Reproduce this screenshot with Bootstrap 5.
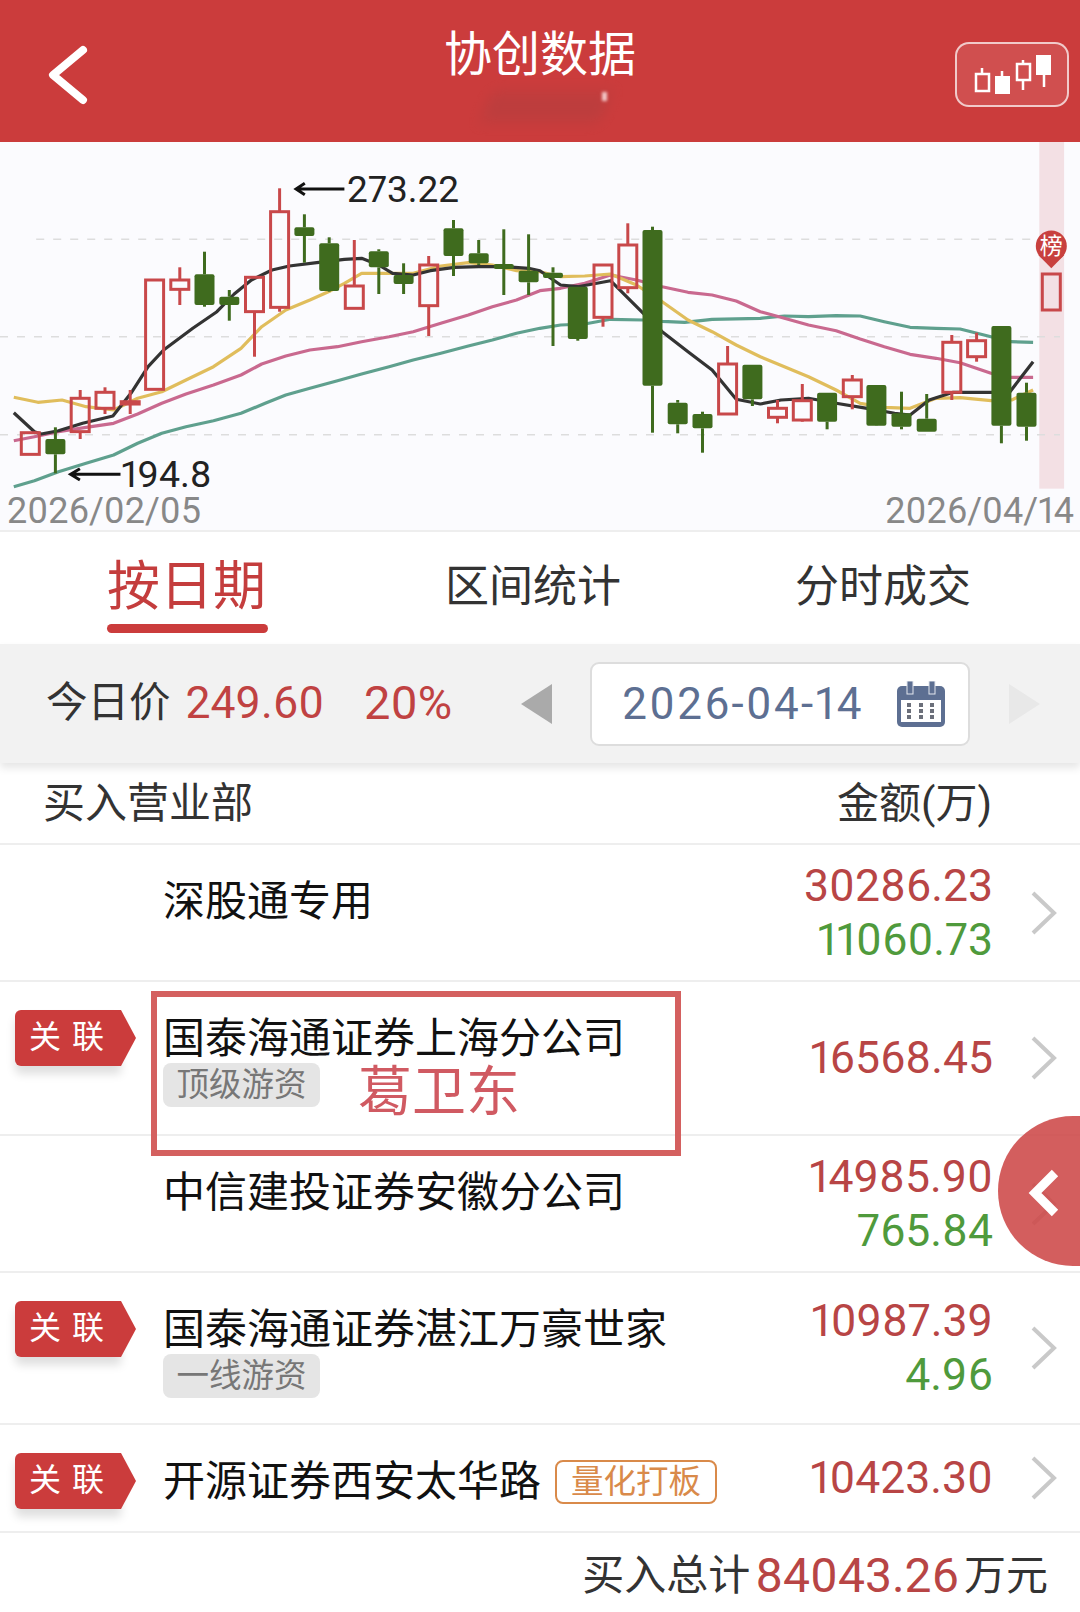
<!DOCTYPE html>
<html lang="zh-CN">
<head>
    <meta charset="UTF-8">
    <meta name="viewport" content="width=device-width, initial-scale=1.0">
    <title>协创数据</title>
    <link rel="stylesheet" href="https://cdn.jsdelivr.net/npm/bootstrap@5.3.2/dist/css/bootstrap.min.css">
    <script src="https://cdn.jsdelivr.net/npm/bootstrap@5.3.2/dist/js/bootstrap.bundle.min.js"></script>
<style>
    html, body{ width: 1080px; height: 1612px; overflow: hidden; }
    body{ font-family: Roboto, "Noto Sans CJK SC", sans-serif; background: #fff; color: #111; font-variant-numeric: proportional-nums; }

    .top-bar{ height: 142px; background: #cb3c3c; padding: 0 11px 0 46px; }
    .back-icon{ margin-top: 8px; }
    .top-title{ position: absolute; left: 0; right: 0; top: 26px; text-align: center; color: #fff; font-size: 48px; line-height: 58px; }
    .top-blur{ position: absolute; left: 486px; top: 92px; width: 120px; height: 30px; background: #a84040; filter: blur(7px); transform: skewX(-20deg); opacity: .4; }
    .top-speck{ position: absolute; left: 602px; top: 92px; width: 5px; height: 9px; background: #f3c9c9; filter: blur(1.5px); }
    .kline-btn{ width: 114px; height: 65px; margin-top: 7px; border: 2px solid rgba(255,255,255,.7); border-radius: 14px; background: rgba(255,255,255,.1); }

    .chart-box{ height: 390px; background: #fbfbfe; }
    .chart-box svg{ display: block; }
    .chart-box text{ font-family: Roboto, "Noto Sans CJK SC", sans-serif; }

    .tab-row{ height: 112px; padding: 30px 0 0 107px; column-gap: 174px; font-size: 44px; line-height: 50px; color: #333; }
    .tab-on{ position: relative; margin-right: 5px; color: #c43d3d; font-size: 53px; }
    .tab-on::after{ content: ""; position: absolute; left: 0; right: -2px; top: 62px; height: 9px; border-radius: 5px; background: #cb3c3c; }

    .price-bar{ position: relative; height: 119px; background: #f2f2f2; padding-left: 46px; box-shadow: 0 5px 8px rgba(0,0,0,.1); font-size: 41.5px; color: #333; }
    .price-num{ color: #c04242; font-size: 44.5px; margin-left: 15px; }
    .price-pct{ margin-left: 40px; font-size: 47px; }
    .tri-left{ width: 0; height: 0; margin-left: 69px; border-style: solid; border-width: 20px 31px 20px 0; border-color: transparent #aaa transparent transparent; }
    .date-box{ width: 380px; height: 84px; margin-left: 38px; padding: 0 23px 0 30px; background: #fff; border: 2px solid #ddd; border-radius: 9px; color: #5d6f92; font-size: 44px; letter-spacing: 2.3px; }
    .tri-right{ width: 0; height: 0; margin-left: 39px; border-style: solid; border-width: 20px 0 20px 31px; border-color: transparent transparent transparent #e8e8e8; }

    .head-row{ height: 82px; padding: 0 88px 0 43px; border-bottom: 2px solid #eee; font-size: 42px; color: #333; }
    .deal-row{ position: relative; border-bottom: 2px solid #eee; }
    .rh-137{ height: 137px; }
    .rh-154{ height: 154px; }
    .rh-152{ height: 152px; }
    .rh-108{ height: 108px; }
    .tag-cell{ width: 163px; flex: none; padding: 28px 0 0 15px; }
    .rel-tag{ position: relative; width: 106px; height: 56px; padding-left: 14px; background: #cb3c3c; color: #fff; border-radius: 6px 0 0 6px; box-shadow: 0 8px 10px rgba(0,0,0,.13); font-size: 32px; line-height: 54px; letter-spacing: 11px; white-space: nowrap; }
    .rel-tag::after{ content: ""; position: absolute; left: 100%; top: 0; border-style: solid; border-width: 28px 0 28px 15px; border-color: transparent transparent transparent #cb3c3c; }
    .name-cell{ padding-top: 33px; font-size: 42px; line-height: 48px; white-space: nowrap; }
    .grey-tag{ width: 157px; height: 44px; background: #e5e5e5; color: #777; border-radius: 8px; font-size: 32.5px; line-height: 44px; text-align: center; }
    .orange-tag{ display: inline-block; width: 162px; height: 44px; margin-left: 14px; border: 2px solid #d98a4a; border-radius: 8px; color: #d98a4a; font-size: 32.5px; line-height: 40px; text-align: center; vertical-align: 3px; }
    .name-note{ position: absolute; left: 358px; top: 81px; color: #d05a62; font-size: 54px; line-height: 60px; }
    .red-frame{ position: absolute; left: 151px; top: 9px; width: 530px; height: 165px; border: 6px solid #d4605f; }
    .amt-cell{ width: 260px; margin-left: auto; text-align: right; font-size: 44.5px; line-height: 54px; }
    .amt-red{ color: #b84545; }
    .amt-green{ color: #4f9a3c; }
    .chev-cell{ width: 87px; flex: none; padding-left: 37px; }

    .float-btn{ position: absolute; left: 998px; top: 1116px; width: 82px; height: 150px; border-radius: 75px 0 0 75px; background: rgba(205,72,72,.88); padding: 53px 0 0 30px; }
    .sum-row{ height: 79px; padding: 6px 32px 0 0; font-size: 42px; color: #333; }
    .sum-num{ color: #b84545; font-size: 48px; margin: 0 5px; }
</style>
</head>
<body>
    <!-- 顶部 -->
    <header class="top-bar position-relative d-flex align-items-center justify-content-between">
        <svg class="back-icon" width="42" height="60" viewBox="0 0 42 60"><path d="M37 5 L7 30 L37 55" fill="none" stroke="#fff" stroke-width="8" stroke-linecap="round" stroke-linejoin="round"/></svg>
        <div class="top-title">协创数据</div>
        <div class="top-blur"></div>
        <div class="top-speck"></div>
        <div class="kline-btn">
            <svg width="110" height="61" viewBox="957 44 110 61">
                <g fill="none" stroke="#fff" stroke-width="2.5">
                    <rect x="976" y="74" width="13" height="17"/>
                    <rect x="1017" y="64" width="13" height="16"/>
                    <path d="M982 68V74M1002 71V76M1023 60V64M1023 80V90M1044 75V87"/>
                </g>
                <rect x="995" y="76" width="15" height="18" fill="#fff"/>
                <rect x="1036" y="55" width="15" height="20" fill="#fff"/>
            </svg>
        </div>
    </header>

    <!-- K线 -->
    <section class="chart-box">
        <svg id="kline" width="1080" height="390" viewBox="0 0 1080 390"></svg>
    </section>

    <!-- 标签页 -->
    <nav class="tab-row d-flex">
        <div class="tab-on">按日期</div>
        <div>区间统计</div>
        <div>分时成交</div>
    </nav>

    <div class="price-bar d-flex align-items-center">
        <span>今日价</span>
        <span class="price-num">249.60</span>
        <span class="price-num price-pct">20%</span>
        <div class="tri-left"></div>
        <div class="date-box d-flex align-items-center justify-content-between">
            <span>2026-04-14</span>
            <svg width="48" height="46" viewBox="0 0 48 46">
                <rect x="0" y="5" width="48" height="41" rx="5" fill="#5d6f92"/>
                <rect x="4" y="19" width="40" height="22" fill="#fff"/>
                <rect x="10" y="0" width="6" height="13" fill="#5d6f92" stroke="#e4e7ee" stroke-width="1"/>
                <rect x="32" y="0" width="6" height="13" fill="#5d6f92" stroke="#e4e7ee" stroke-width="1"/>
                <g fill="#6b6f7a">
                    <rect x="10" y="22" width="4" height="4"/><rect x="22" y="22" width="4" height="4"/><rect x="33" y="22" width="4" height="4"/>
                    <rect x="10" y="28" width="4" height="4"/><rect x="22" y="28" width="4" height="4"/><rect x="33" y="28" width="4" height="4"/>
                    <rect x="10" y="34" width="4" height="4"/><rect x="22" y="34" width="4" height="4"/><rect x="33" y="34" width="4" height="4"/>
                </g>
            </svg>
        </div>
        <div class="tri-right"></div>
    </div>

    <div class="head-row d-flex align-items-center justify-content-between">
        <span>买入营业部</span>
        <span>金额(万)</span>
    </div>

    <div class="deal-row rh-137 d-flex">
        <div class="tag-cell"></div>
        <div class="name-cell">深股通专用</div>
        <div class="amt-cell align-self-center"><div class="amt-red">30286.23</div><div class="amt-green">11060.73</div></div>
        <div class="chev-cell align-self-center"><svg width="28" height="46" viewBox="0 0 28 46"><path d="M3 3 L24 23 L3 43" fill="none" stroke="#c9c9c9" stroke-width="4"/></svg></div>
    </div>

    <div class="deal-row rh-154 d-flex">
        <div class="tag-cell"><div class="rel-tag">关联</div></div>
        <div class="name-cell">国泰海通证券上海分公司<div class="grey-tag">顶级游资</div></div>
        <div class="name-note">葛卫东</div>
        <div class="red-frame"></div>
        <div class="amt-cell align-self-center"><div class="amt-red">16568.45</div></div>
        <div class="chev-cell align-self-center"><svg width="28" height="46" viewBox="0 0 28 46"><path d="M3 3 L24 23 L3 43" fill="none" stroke="#c9c9c9" stroke-width="4"/></svg></div>
    </div>

    <div class="deal-row rh-137 d-flex">
        <div class="tag-cell"></div>
        <div class="name-cell">中信建投证券安徽分公司</div>
        <div class="amt-cell align-self-center"><div class="amt-red">14985.90</div><div class="amt-green">765.84</div></div>
        <div class="chev-cell align-self-center"><svg width="28" height="46" viewBox="0 0 28 46"><path d="M3 3 L24 23 L3 43" fill="none" stroke="#c9c9c9" stroke-width="4"/></svg></div>
    </div>

    <div class="deal-row rh-152 d-flex">
        <div class="tag-cell"><div class="rel-tag">关联</div></div>
        <div class="name-cell">国泰海通证券湛江万豪世家<div class="grey-tag">一线游资</div></div>
        <div class="amt-cell align-self-center"><div class="amt-red">10987.39</div><div class="amt-green">4.96</div></div>
        <div class="chev-cell align-self-center"><svg width="28" height="46" viewBox="0 0 28 46"><path d="M3 3 L24 23 L3 43" fill="none" stroke="#c9c9c9" stroke-width="4"/></svg></div>
    </div>

    <div class="deal-row rh-108 d-flex">
        <div class="tag-cell"><div class="rel-tag">关联</div></div>
        <div class="name-cell">开源证券西安太华路<span class="orange-tag">量化打板</span></div>
        <div class="amt-cell align-self-center"><div class="amt-red">10423.30</div></div>
        <div class="chev-cell align-self-center"><svg width="28" height="46" viewBox="0 0 28 46"><path d="M3 3 L24 23 L3 43" fill="none" stroke="#c9c9c9" stroke-width="4"/></svg></div>
    </div>

    <div class="sum-row d-flex align-items-center justify-content-end">
        <span>买入总计</span><span class="sum-num">84043.26</span><span>万元</span>
    </div>

    <!-- 右侧悬浮按钮 -->
    <div class="float-btn"><svg width="32" height="48" viewBox="0 0 32 48"><path d="M27 4 L7 24 L27 44" fill="none" stroke="#fff" stroke-width="9"/></svg></div>

    <script>
        // 坐标: x 按 2.904 缩放, y 按 3 缩放 (量自参考图)
        const px = x => (x / 2.904).toFixed(1);
        const py = y => (y / 3 - 2).toFixed(1);
        const R = 1568;

        // [x, 最高, 最低, 实体上, 实体下, 是否阳线]
        const candles = [
            [88,878,943,878,943,1],[161,862,1000,897,943,0],[233,750,897,775,875,1],[305,742,822,757,805,1],
            [378,750,822,785,792,1],[449,420,748,420,748,1],[522,382,495,420,448,1],[594,335,500,403,495,0],
            [666,450,542,470,495,0],[739,412,650,412,515,1],[812,145,515,215,502,1],[884,223,368,262,288,0],
            [956,292,455,310,453,0],[1029,300,505,438,505,1],[1100,328,462,334,382,0],[1172,370,462,405,432,0],
            [1245,348,588,375,497,1],[1317,240,408,265,348,0],[1390,300,375,340,370,0],[1463,268,465,372,387,0],
            [1535,283,465,392,427,0],[R+38,382,618,398,414,0],[R+110,440,602,440,597,0],[R+183,375,560,375,532,1],
            [R+255,250,460,315,443,1],[R+327,260,878,270,737,0],[R+400,780,880,788,853,0],[R+472,815,938,822,865,0],
            [R+545,618,822,672,822,1],[R+617,674,798,674,778,0],[R+690,780,850,805,832,1],[R+762,732,845,782,840,1],
            [R+834,758,868,758,845,0],[R+907,705,808,720,770,1],[R+977,735,858,735,857,0],[R+1050,755,868,820,860,0],
            [R+1123,762,875,836,875,0],[R+1196,585,780,607,757,1],[R+1268,578,665,602,650,1],[R+1340,558,910,558,857,0],
            [R+1413,728,902,758,860,0],[R+1485,402,510,402,510,1]
        ];

        const lines = [
            ['#5fa08e', [40,1040,100,1022,170,995,250,970,330,945,400,910,470,880,540,860,620,842,700,820,770,790,830,765,900,745,980,722,1050,702,1130,680,1200,660,1280,640,1360,618,1430,600,1500,580,1568,565,
                R+60,555,R+130,552,R+205,538,R+300,540,R+355,544,R+420,547,R+500,538,R+640,535,R+710,528,R+780,530,R+860,527,R+930,528,R+1000,545,R+1075,562,R+1150,565,R+1220,567,R+1310,590,R+1365,605,R+1432,607]],
            ['#c9698f', [40,902,100,890,170,875,250,862,330,850,400,822,470,790,540,762,620,735,700,705,760,672,830,648,900,630,980,620,1050,605,1130,590,1200,575,1280,550,1360,525,1430,500,1500,480,1568,452,
                R+60,445,R+130,430,R+205,405,R+280,420,R+355,440,R+430,457,R+500,465,R+570,483,R+640,515,R+710,535,R+780,555,R+860,572,R+930,597,R+1000,620,R+1075,643,R+1150,655,R+1220,668,R+1310,700,R+1365,712,R+1432,712]],
            ['#e0bd5c', [40,772,110,787,180,780,250,800,330,810,400,775,470,755,540,720,620,680,700,625,760,560,830,510,900,480,960,452,1000,430,1050,400,1130,400,1200,400,1280,378,1360,368,1430,375,1500,392,1568,395,
                R+60,410,R+130,408,R+205,402,R+280,435,R+355,485,R+430,540,R+500,575,R+570,615,R+640,650,R+710,680,R+780,710,R+860,750,R+930,790,R+1000,802,R+1075,805,R+1150,775,R+1220,773,R+1310,782,R+1370,780,R+1432,750]],
            ['#333', [40,818,100,875,120,882,170,872,240,850,328,828,380,760,430,680,475,630,560,565,630,515,680,462,730,420,790,390,840,378,920,368,1000,358,1050,355,1100,375,1140,400,1200,405,1250,392,1320,382,1390,380,1463,380,1535,385,1568,392,
                R+60,435,R+110,440,R+205,422,R+300,520,R+355,575,R+430,635,R+500,690,R+570,778,R+640,792,R+700,780,R+780,775,R+860,790,R+950,805,R+1030,820,R+1075,825,R+1130,780,R+1200,757,R+1310,757,R+1365,755,R+1432,665]]
        ];

        let svg = '';

        // 选中列
        svg += `<rect x="${px(R+1450)}" y="0" width="${px(72)}" height="${1040/3}" fill="#f3e0e4"/>`;

        // 虚线
        [[105,298],[0,590],[0,884]].forEach(g => {
            svg += `<line x1="${px(g[0])}" x2="1060" y1="${py(g[1])}" y2="${py(g[1])}" stroke="#ddd" stroke-width="1.5" stroke-dasharray="8 9"/>`;
        });

        lines.forEach(l => {
            let pts = [];
            for (let i = 0; i < l[1].length; i += 2) pts.push(px(l[1][i]) + ',' + py(l[1][i + 1]));
            svg += `<polyline points="${pts.join(' ')}" fill="none" stroke="${l[0]}" stroke-width="3.2" stroke-linejoin="round"/>`;
        });

        candles.forEach(c => {
            const color = c[5] ? '#c8484a' : '#3f6b1e';
            const x = px(c[0]);
            const left = (c[0] / 2.904 - 9).toFixed(1);
            const h = Math.max((c[4] - c[3]) / 3, 1);
            svg += `<line x1="${x}" x2="${x}" y1="${py(c[1])}" y2="${py(c[3])}" stroke="${color}" stroke-width="3"/>`;
            svg += `<line x1="${x}" x2="${x}" y1="${py(c[4])}" y2="${py(c[2])}" stroke="${color}" stroke-width="3"/>`;
            if (c[5]) {
                svg += `<rect x="${left}" y="${py(c[3])}" width="18" height="${h}" fill="none" stroke="${color}" stroke-width="3"/>`;
            } else {
                svg += `<rect x="${(c[0] / 2.904 - 10).toFixed(1)}" y="${py(c[3])}" width="20" height="${h}" rx="2" fill="${color}"/>`;
            }
        });

        // 榜
        const pinX = (R + 1485) / 2.904;
        svg += `<path d="M${pinX - 13} ${py(345)} L${pinX} ${py(385)} L${pinX + 13} ${py(345)} Z" fill="#c8403e"/>`;
        svg += `<circle cx="${pinX}" cy="${py(318)}" r="15.5" fill="#c8403e"/>`;
        svg += `<text x="${pinX}" y="${py(318) * 1 + 8}" text-anchor="middle" font-size="23" fill="#fff">榜</text>`;

        // 最高最低
        svg += `<path d="M${px(1000)} ${py(147)} H${px(862)} M${px(885)} ${py(130)} L${px(860)} ${py(147)} L${px(885)} ${py(164)}" fill="none" stroke="#111" stroke-width="3"/>`;
        svg += `<text x="${px(1008)}" y="${py(185)}" font-size="37" fill="#222">273.22</text>`;
        svg += `<path d="M${px(350)} ${py(1003)} H${px(207)} M${px(232)} ${py(986)} L${px(205)} ${py(1003)} L${px(232)} ${py(1020)}" fill="none" stroke="#111" stroke-width="3"/>`;
        svg += `<text x="${px(352)}" y="${py(1040)}" font-size="37.5" fill="#222">194.8</text>`;

        // 日期
        svg += `<text x="7" y="${py(1148)}" font-size="36" fill="#888">2026/02/05</text>`;
        svg += `<text x="1074" y="${py(1148)}" text-anchor="end" font-size="36" fill="#888">2026/04/14</text>`;

        // 底边线
        svg += `<rect x="0" y="388" width="1080" height="2" fill="#eee"/>`;

        document.getElementById('kline').innerHTML = svg;
    </script>
</body>
</html>
